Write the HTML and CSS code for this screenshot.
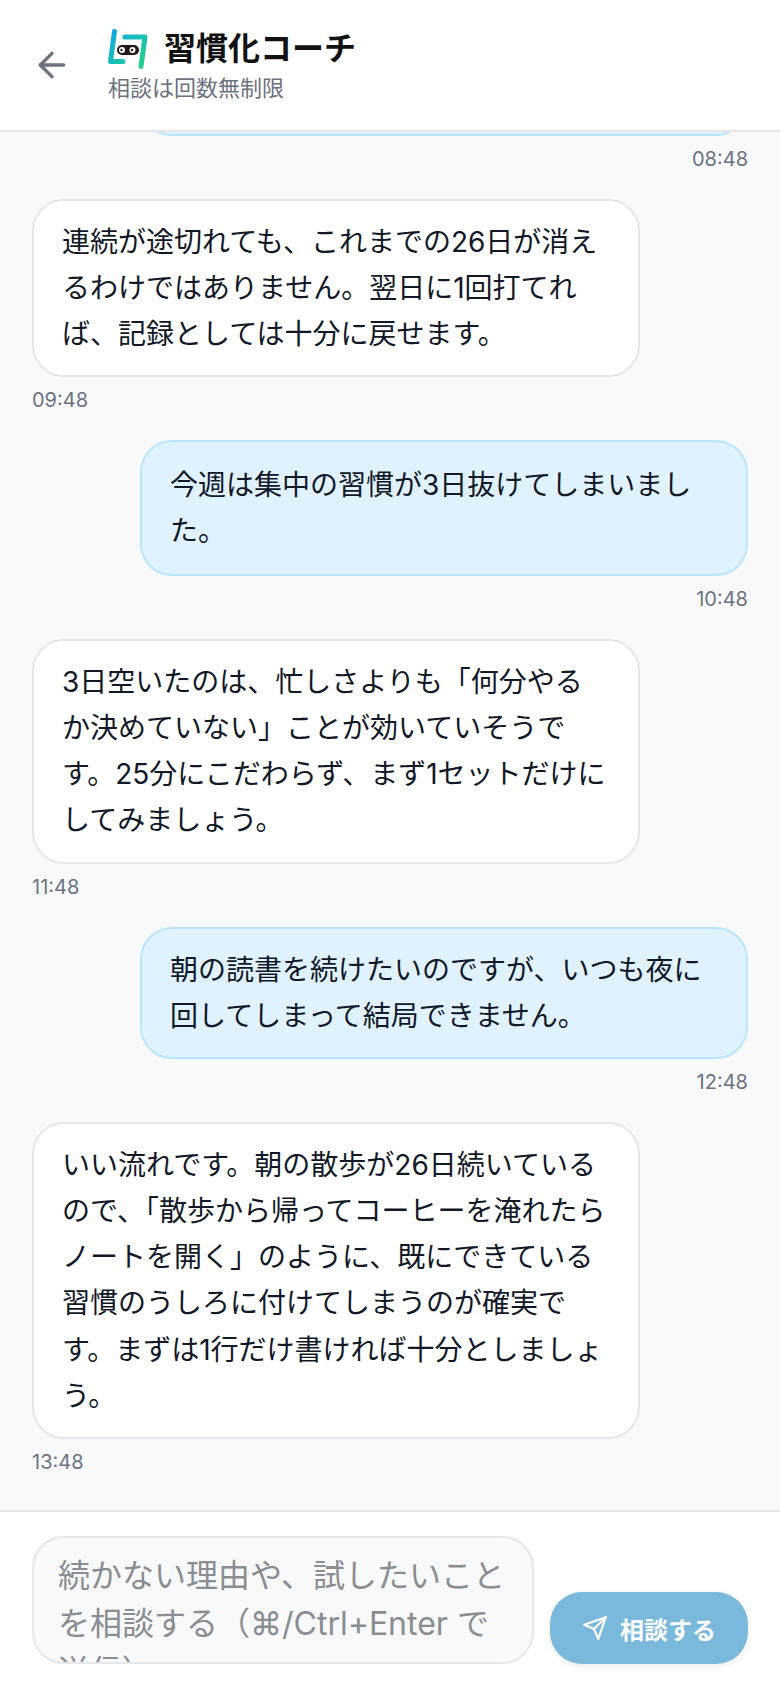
FILE: index.html
```html
<!DOCTYPE html>
<html lang="ja">
<head>
  <meta charset="UTF-8">
  <meta name="viewport" content="width=device-width, initial-scale=1.0">
  <title>習慣化コーチ</title>
  <link rel="stylesheet" href="styles.css">
</head>
<body>
  <div class="app">
    <!-- Header -->
    <header class="top-bar">
      <button class="back-btn" aria-label="戻る">
        <svg width="40" height="40" viewBox="0 0 24 24" fill="none" stroke="currentColor" stroke-width="2" stroke-linecap="round" stroke-linejoin="round">
          <path d="M19 12H5"/>
          <path d="M12 19l-7-7 7-7"/>
        </svg>
      </button>
      <div class="coach-info">
        <div class="coach-name">
          <svg class="logo" width="40" height="40" viewBox="0 0 40 40" fill="none">
            <defs>
              <linearGradient id="logoGrad" x1="0" y1="0" x2="36" y2="36" gradientUnits="userSpaceOnUse">
                <stop offset="0" stop-color="#0ea5e9"/>
                <stop offset="1" stop-color="#22d38a"/>
              </linearGradient>
            </defs>
            <path d="M6.500 2.500L2.500 32.500H15M17 8H37L33 37.500" stroke="url(#logoGrad)" stroke-width="5" stroke-linecap="round" stroke-linejoin="round"/>
            <rect x="9" y="16" width="22" height="10" rx="5" fill="#231815"/>
            <circle cx="14" cy="21" r="3" fill="#fff"/>
            <circle cx="24.500" cy="21" r="3" fill="#fff"/>
            <circle cx="13.500" cy="21" r="1.200" fill="#231815"/>
            <circle cx="24" cy="21" r="1.200" fill="#231815"/>
          </svg>
          <h1>習慣化コーチ</h1>
        </div>
        <p class="coach-sub">相談は回数無制限</p>
      </div>
    </header>

    <!-- Messages -->
    <main class="messages">
      <div class="msg user">
        <div class="bubble">今日も朝の散歩ができました。</div>
        <div class="time">08:48</div>
      </div>
      <div class="msg coach">
        <div class="bubble">連続が途切れても、これまでの26日が消えるわけではありません。翌日に1回打てれば、記録としては十分に戻せます。</div>
        <div class="time">09:48</div>
      </div>
      <div class="msg user">
        <div class="bubble tall">今週は集中の習慣が3日抜けてしまいました。</div>
        <div class="time">10:48</div>
      </div>
      <div class="msg coach">
        <div class="bubble">3日空いたのは、忙しさよりも「何分やるか決めていない」ことが効いていそうです。25分にこだわらず、まず1セットだけにしてみましょう。</div>
        <div class="time">11:48</div>
      </div>
      <div class="msg user">
        <div class="bubble">朝の読書を続けたいのですが、いつも夜に回してしまって結局できません。</div>
        <div class="time">12:48</div>
      </div>
      <div class="msg coach">
        <div class="bubble">いい流れです。朝の散歩が26日続いているので、「散歩から帰ってコーヒーを淹れたらノートを開く」のように、既にできている習慣のうしろに付けてしまうのが確実です。まずは1行だけ書ければ十分としましょう。</div>
        <div class="time">13:48</div>
      </div>
    </main>

    <!-- Input -->
    <footer class="composer">
      <textarea class="composer-input" placeholder="続かない理由や、試したいことを相談する（⌘/Ctrl+Enter で送信）"></textarea>
      <button class="send-btn">
        <svg width="26" height="26" viewBox="0 0 24 24" fill="none" stroke="currentColor" stroke-width="2" stroke-linecap="round" stroke-linejoin="round">
          <path d="M22 2L11 13"/>
          <path d="M22 2L15 22L11 13L2 9L22 2Z"/>
        </svg>
        相談する
      </button>
    </footer>
  </div>
</body>
</html>
```
FILE: styles.css
```css
* {
  box-sizing: border-box;
}
html, body {
  height: 100%;
}
body {
  margin: 0;
  font-family: Inter, "Noto Sans CJK JP", sans-serif;
  color: #111827;
  background: #f8f9fb;
}
.app {
  display: flex;
  flex-direction: column;
  height: 100vh;
}

/* Header */
.top-bar {
  display: flex;
  align-items: center;
  gap: 36px;
  height: 132px;
  padding: 0 32px;
  background: #fff;
  border-bottom: 2px solid #e5e7eb;
  flex-shrink: 0;
}
.back-btn {
  display: flex;
  padding: 0;
  border: none;
  background: none;
  color: #6b7280;
}
.coach-name {
  display: flex;
  align-items: center;
  gap: 16px;
}
.coach-name h1 {
  margin: 0;
  font-family: "Liberation Serif", "Noto Sans CJK JP", serif;
  font-size: 32px;
  font-weight: 700;
  line-height: 44px;
  color: #111;
}
.coach-sub {
  margin: 1px 0 0;
  font-size: 22px;
  line-height: 32px;
  color: #6b7280;
}

/* Messages */
.messages {
  flex: 1;
  min-height: 0;
  overflow: hidden;
  display: flex;
  flex-direction: column;
  justify-content: flex-end;
  gap: 24px;
  padding: 0 32px 32px;
}
.msg {
  display: flex;
  flex-direction: column;
  flex-shrink: 0;
  gap: 7px;
}
.msg.user {
  align-items: flex-end;
}
.msg.coach {
  align-items: flex-start;
}
.bubble {
  width: 608px;
  padding: 18px 28px;
  font-size: 28px;
  line-height: 1.65;
  border-radius: 32px;
  border: 2px solid #e5e7eb;
  background: #fff;
}
.bubble.tall {
  padding-top: 19.5px;
  padding-bottom: 19.5px;
}
.msg.user .bubble {
  background: #e0f2fe;
  border-color: #bae6fd;
}
.time {
  font-size: 20px;
  line-height: 32px;
  color: #6b7280;
}

/* Input */
.composer {
  display: flex;
  align-items: flex-end;
  gap: 16px;
  padding: 24px 32px;
  background: #fff;
  border-top: 2px solid #e5e7eb;
  flex-shrink: 0;
}
.composer-input {
  flex: 1;
  height: 128px;
  padding: 14px 24px;
  font-family: inherit;
  font-size: 32px;
  line-height: 48px;
  color: #111827;
  background: #f8f9fb;
  border: 2px solid #e5e7eb;
  border-radius: 32px;
  resize: none;
  overflow: hidden;
}
.composer-input::placeholder {
  color: #8a8d91;
}
.send-btn {
  display: flex;
  align-items: center;
  justify-content: center;
  gap: 12px;
  width: 198px;
  height: 72px;
  font-family: inherit;
  font-size: 24px;
  font-weight: 700;
  color: #fff;
  background: #7ab8dc;
  border: none;
  border-radius: 32px;
  box-shadow: 0 2px 6px rgba(0, 0, 0, 0.08);
}
```
